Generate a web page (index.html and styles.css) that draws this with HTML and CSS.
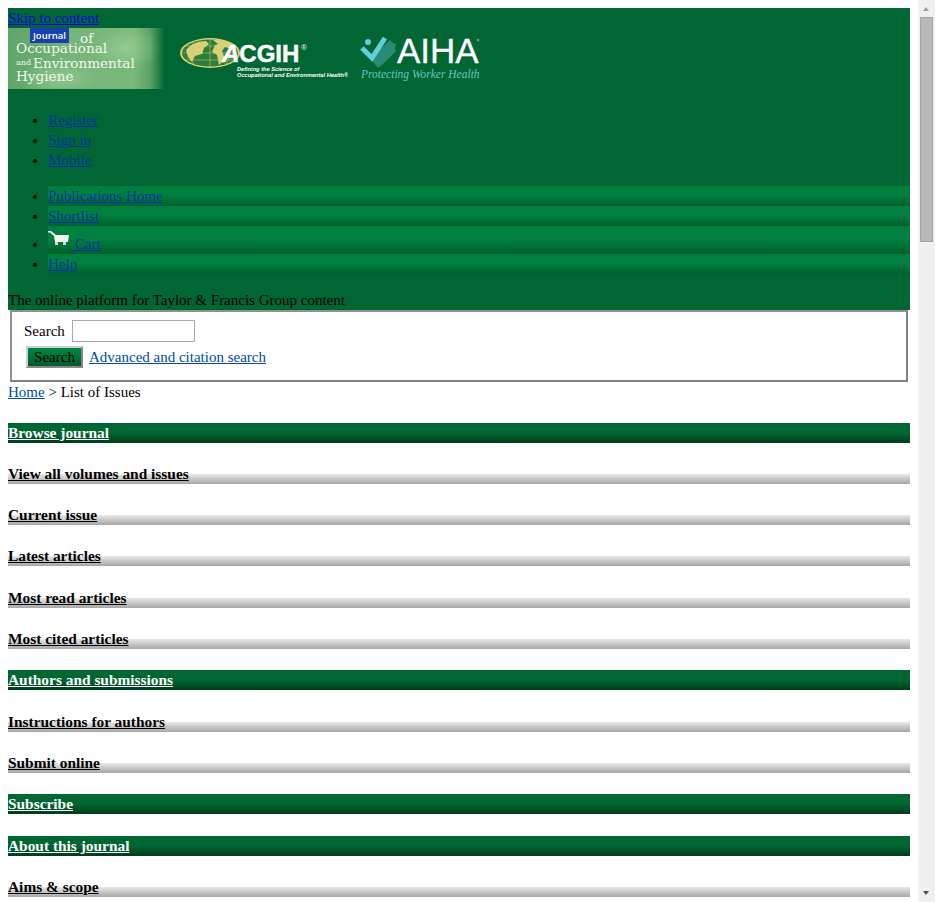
FILE: index.html
```html
<!DOCTYPE html>
<html lang="en">
<head>
<meta charset="utf-8">
<title>List of Issues</title>
<link rel="stylesheet" href="styles.css">
</head>
<body>
<header class="masthead">
  <div class="skip"><a href="#content">Skip to content</a></div>
  <div class="logos">
    <svg class="logo-journal" width="157" height="61" viewBox="0 0 157 61">
      <defs>
        <linearGradient id="jfade" x1="0" x2="1" y1="0" y2="0">
          <stop offset="0" stop-color="#5fa468"/>
          <stop offset="0.4" stop-color="#76b47a"/>
          <stop offset="0.8" stop-color="#7ab87c"/>
          <stop offset="0.9" stop-color="#5da566"/>
          <stop offset="1" stop-color="#006633"/>
        </linearGradient>
        <radialGradient id="jglow">
          <stop offset="0" stop-color="#a8d8a0" stop-opacity="0.55"/>
          <stop offset="1" stop-color="#a8d8a0" stop-opacity="0"/>
        </radialGradient>
      </defs>
      <rect width="157" height="61" fill="url(#jfade)"/>
      <ellipse cx="118" cy="20" rx="34" ry="22" fill="url(#jglow)"/>
      <ellipse cx="50" cy="50" rx="40" ry="18" fill="url(#jglow)"/>
      <rect x="22" y="0" width="39" height="15" fill="#1a3fb0"/>
      <text x="25" y="11" class="lj-tag">Journal</text>
      <text x="72" y="15" class="lj-main">of</text>
      <text x="8" y="25" class="lj-main">Occupational</text>
      <text x="8" y="37" class="lj-small">and</text>
      <text x="25" y="40" class="lj-main">Environmental</text>
      <text x="8" y="53" class="lj-main">Hygiene</text>
    </svg>
    <svg class="logo-acgih" width="168" height="61" viewBox="0 0 168 61">
      <ellipse cx="30" cy="25" rx="30" ry="15" fill="#d9cf77"/>
      <ellipse cx="30" cy="25" rx="28" ry="13.500" fill="#2e7d3a"/>
      <path d="M6 22c5-6 12-9 20-9l3 3-5 4-2 6-7 2-3 6-4-5zM33 12c9-1 16 1 22 6l-3 3-7-2-3 4 3 8-6 6-2-10-5-3 3-7 3-1z" fill="#d9cf77"/>
      <path d="M3 25h54M30 11v28M14 14c-5 7-5 15 0 22M46 14c5 7 5 15 0 22M5 18h50M5 32h50" stroke="#d9cf77" stroke-width="0.5" fill="none"/>
      <text x="42" y="34" class="la-main"><tspan class="la-a">A</tspan>CGIH</text>
      <text x="121" y="22" class="la-reg">®</text>
      <text x="57" y="43" class="la-tag">Defining the Science of</text>
      <text x="57" y="49" class="la-tag">Occupational and Environmental Health®</text>
    </svg>
    <svg class="logo-aiha" width="122" height="61" viewBox="0 0 122 61">
      <path d="M13 34l7-13 10-9 3 3 3 1-1 5 1 2-12 12-6 5z" fill="#2a8a78"/>
      <circle cx="8" cy="14" r="3" fill="#5fd0dc"/>
      <path d="M2 20l10 10L25 10" stroke="#5fd0dc" stroke-width="5" fill="none"/>
      <text x="37" y="35" class="lh-main">AIHA</text>
      <circle cx="118" cy="12" r="1" stroke="#fff" stroke-width="0.4" fill="none"/>
      <text x="1" y="50" class="lh-tag">Protecting Worker Health</text>
    </svg>
  </div>
  <ul class="account">
    <li><a href="#">Register</a></li>
    <li><a href="#">Sign in</a></li>
    <li><a href="#">Mobile</a></li>
  </ul>
  <ul class="mainnav">
    <li><a href="#">Publications Home</a></li>
    <li><a href="#">Shortlist</a></li>
    <li><a href="#"><svg class="cart" width="22" height="14" viewBox="0 0 22 14"><path d="M0 0h3l5 4h13l-1 7H7L6 5 2 1.500H0z" fill="#f2f2f2"/><path d="M7 11h3v3H7zM15 11h3v3h-3z" fill="#d4d4d4"/></svg> Cart</a></li>
    <li><a href="#">Help</a></li>
  </ul>
  <p class="tagline">The online platform for Taylor &amp; Francis Group content</p>
</header>
<form class="search">
  <div class="search-row"><label class="search-label" for="q">Search</label> <input id="q" class="search-input" type="text"></div>
  <div class="search-row"><button class="search-btn" type="button">Search</button> <a class="link" href="#">Advanced and citation search</a></div>
</form>
<div class="crumbs"><a class="link" href="#">Home</a> &gt; List of Issues</div>
<nav id="content" class="side">
  <h2 class="sec"><a href="#">Browse journal</a></h2>
  <h3 class="sub"><a href="#">View all volumes and issues</a></h3>
  <h3 class="sub"><a href="#">Current issue</a></h3>
  <h3 class="sub"><a href="#">Latest articles</a></h3>
  <h3 class="sub"><a href="#">Most read articles</a></h3>
  <h3 class="sub"><a href="#">Most cited articles</a></h3>
  <h2 class="sec"><a href="#">Authors and submissions</a></h2>
  <h3 class="sub"><a href="#">Instructions for authors</a></h3>
  <h3 class="sub"><a href="#">Submit online</a></h3>
  <h2 class="sec"><a href="#">Subscribe</a></h2>
  <h2 class="sec"><a href="#">About this journal</a></h2>
  <h3 class="sub"><a href="#">Aims &amp; scope</a></h3>
</nav>
<div class="scrollbar" aria-hidden="true">
  <span class="arrow-up"></span>
  <span class="thumb"></span>
  <span class="arrow-down"></span>
</div>
</body>
</html>
```
FILE: styles.css
```css
html { height: 100%; overflow: hidden; background: #fff; }
body {
  margin: 8px 25px 8px 8px;
  font: 15px/20px "Liberation Serif", "Times New Roman", serif;
  color: #000;
}
.masthead { background: #006633; }
.masthead a { color: #0033aa; }
.skip a { color: #0000ee; }
.skip { height: 20px; }
.logos { display: flex; height: 61px; }
.logos svg { display: block; }
.logo-acgih { margin-left: 15px; }
.logo-aiha { margin-left: 12px; }
.lj-tag { font: 600 9.500px "Open Sans", sans-serif; fill: #fff; }
.lj-main { font: 13.600px "DejaVu Serif", serif; fill: #f2f7ec; }
.lj-small { font: 8px "DejaVu Serif", serif; fill: #f2f7ec; }
.la-main { font: bold 24px "Liberation Sans", sans-serif; fill: #fff; stroke: #fff; stroke-width: 0.5px; }
.la-a { font-style: italic; }
.la-reg { font: 8px "Liberation Sans", sans-serif; fill: #fff; }
.la-tag { font: italic bold 5.650px "Liberation Sans", sans-serif; fill: #fff; }
.lh-main { font: 35px "Liberation Sans", sans-serif; fill: #fff; stroke: #fff; stroke-width: 0.3px; }
.lh-tag { font: italic 11.500px "Liberation Serif", serif; fill: #5fc8c8; }
.account { margin: 21px 0 16px; padding-left: 40px; }
.mainnav { margin: 16px 0; padding-left: 40px; }
.mainnav li { background: linear-gradient(#00803f 0, #00803f 45%, #005f2e 100%); }
.cart { vertical-align: 4px; margin-top: 5px; margin-right: 1px; }
.tagline { margin: 16px 0 0; }
.search {
  margin: 0 2px;
  height: 72px;
  box-sizing: border-box;
  border: 2px solid #808080;
  border-top-color: #909090;
  border-left-color: #909090;
  padding: 6px 0 0 12px;
  background: #fff;
}
.search-row { display: flex; align-items: center; gap: 6px; height: 26px; }
.search-label { width: 42px; }
.search-input {
  width: 123px; height: 22px; box-sizing: border-box;
  border: 1px solid #a9a9a9; padding: 0; background: #fff;
}
.search-btn {
  margin-left: 2px;
  width: 57px; height: 22px; box-sizing: border-box; padding: 0;
  font: 15px "Liberation Serif", serif; color: #000;
  background: linear-gradient(#008a45, #005a2c);
  border: 2px solid; border-color: #d0d0d0 #888 #888 #d0d0d0;
}
.link { color: #004a9f; }
.crumbs { height: 19.300px; }
.sec, .sub { font-size: 15.400px; line-height: 20px; margin: 21.300px 0; }
.sec { background: linear-gradient(#006633 0, #006633 50%, #003d1a 100%); }
.sec a { color: #fff; }
.sub { background: linear-gradient(#fff 0, #fff 50%, #e8e8e8 50%, #a6a6a6 100%); }
.sub a { color: #000; }
.scrollbar {
  position: fixed; top: 0; right: 0; bottom: 0; width: 17px; background: #f0f0f0;
}
.thumb {
  position: absolute; left: 2px; top: 17px; width: 13px; height: 225px;
  box-sizing: border-box; background: #b9b9b9; border: 1px solid #a4a4a4;
}
.arrow-up, .arrow-down {
  position: absolute; left: 5px; width: 0; height: 0;
  border-left: 3.500px solid transparent; border-right: 3.500px solid transparent;
}
.arrow-up { top: 7px; border-bottom: 4px solid #a0a0a0; }
.arrow-down { top: 891px; border-top: 4px solid #505050; }
```
